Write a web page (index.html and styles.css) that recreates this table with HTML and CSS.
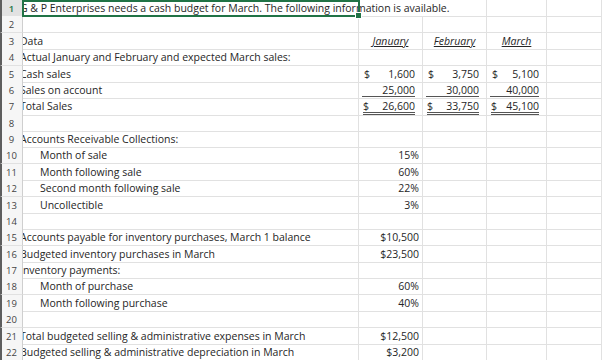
FILE: index.html
```html
<!DOCTYPE html>
<html>
<head>
<meta charset="utf-8">
<link rel="stylesheet" href="styles.css">
</head>
<body>
<div class="sheet">
  <div class="row sel"><div class="rh">1</div><div class="c a ov"><span class="t">G &amp; P Enterprises needs a cash budget for March. The following information is available.</span></div><div class="c b nob"></div><div class="c cc"></div><div class="c d"></div><div class="c e"></div></div>
  <div class="row"><div class="rh">2</div><div class="c a"></div><div class="c b"></div><div class="c cc"></div><div class="c d"></div><div class="c e"></div></div>
  <div class="row"><div class="rh">3</div><div class="c a"><span class="t">Data</span></div><div class="c b mo">January</div><div class="c cc mo">February</div><div class="c d mo">March</div><div class="c e"></div></div>
  <div class="row"><div class="rh">4</div><div class="c a"><span class="t">Actual January and February and expected March sales:</span></div><div class="c b"></div><div class="c cc"></div><div class="c d"></div><div class="c e"></div></div>
  <div class="row"><div class="rh">5</div><div class="c a"><span class="t">Cash sales</span></div>
    <div class="c b"><div class="acct"><span>$</span><span>1,600</span></div></div>
    <div class="c cc"><div class="acct"><span>$</span><span>3,750</span></div></div>
    <div class="c d"><div class="acct"><span>$</span><span>5,100</span></div></div><div class="c e"></div></div>
  <div class="row"><div class="rh">6</div><div class="c a"><span class="t">Sales on account</span></div>
    <div class="c b"><div class="acct u1"><span></span><span>25,000</span></div></div>
    <div class="c cc"><div class="acct u1"><span></span><span>30,000</span></div></div>
    <div class="c d"><div class="acct u1"><span></span><span>40,000</span></div></div><div class="c e"></div></div>
  <div class="row"><div class="rh">7</div><div class="c a"><span class="t">Total Sales</span></div>
    <div class="c b"><div class="acct u2"><span>$</span><span>26,600</span></div></div>
    <div class="c cc"><div class="acct u2"><span>$</span><span>33,750</span></div></div>
    <div class="c d"><div class="acct u2"><span>$</span><span>45,100</span></div></div><div class="c e"></div></div>
  <div class="row"><div class="rh">8</div><div class="c a"></div><div class="c b"></div><div class="c cc"></div><div class="c d"></div><div class="c e"></div></div>
  <div class="row"><div class="rh">9</div><div class="c a"><span class="t">Accounts Receivable Collections:</span></div><div class="c b"></div><div class="c cc"></div><div class="c d"></div><div class="c e"></div></div>
  <div class="row"><div class="rh">10</div><div class="c a"><span class="t ind">Month of sale</span></div><div class="c b num">15%</div><div class="c cc"></div><div class="c d"></div><div class="c e"></div></div>
  <div class="row"><div class="rh">11</div><div class="c a"><span class="t ind">Month following sale</span></div><div class="c b num">60%</div><div class="c cc"></div><div class="c d"></div><div class="c e"></div></div>
  <div class="row"><div class="rh">12</div><div class="c a"><span class="t ind">Second month following sale</span></div><div class="c b num">22%</div><div class="c cc"></div><div class="c d"></div><div class="c e"></div></div>
  <div class="row"><div class="rh">13</div><div class="c a"><span class="t ind">Uncollectible</span></div><div class="c b num">3%</div><div class="c cc"></div><div class="c d"></div><div class="c e"></div></div>
  <div class="row"><div class="rh">14</div><div class="c a"></div><div class="c b"></div><div class="c cc"></div><div class="c d"></div><div class="c e"></div></div>
  <div class="row"><div class="rh">15</div><div class="c a"><span class="t">Accounts payable for inventory purchases, March 1 balance</span></div><div class="c b num">$10,500</div><div class="c cc"></div><div class="c d"></div><div class="c e"></div></div>
  <div class="row"><div class="rh">16</div><div class="c a"><span class="t">Budgeted inventory purchases in March</span></div><div class="c b num">$23,500</div><div class="c cc"></div><div class="c d"></div><div class="c e"></div></div>
  <div class="row"><div class="rh">17</div><div class="c a"><span class="t">Inventory payments:</span></div><div class="c b"></div><div class="c cc"></div><div class="c d"></div><div class="c e"></div></div>
  <div class="row"><div class="rh">18</div><div class="c a"><span class="t ind">Month of purchase</span></div><div class="c b num">60%</div><div class="c cc"></div><div class="c d"></div><div class="c e"></div></div>
  <div class="row"><div class="rh">19</div><div class="c a"><span class="t ind">Month following purchase</span></div><div class="c b num">40%</div><div class="c cc"></div><div class="c d"></div><div class="c e"></div></div>
  <div class="row"><div class="rh">20</div><div class="c a"></div><div class="c b"></div><div class="c cc"></div><div class="c d"></div><div class="c e"></div></div>
  <div class="row"><div class="rh">21</div><div class="c a"><span class="t">Total budgeted selling &amp; administrative expenses in March</span></div><div class="c b num">$12,500</div><div class="c cc"></div><div class="c d"></div><div class="c e"></div></div>
  <div class="row"><div class="rh">22</div><div class="c a"><span class="t">Budgeted selling &amp; administrative depreciation in March</span></div><div class="c b num">$3,200</div><div class="c cc"></div><div class="c d"></div><div class="c e"></div></div>
  <div class="selbox"><div class="handle"></div></div>
</div>
</body>
</html>
```
FILE: styles.css
```css
html, body {
  margin: 0;
  padding: 0;
  background: #ffffff;
}
body {
  font-family: "Open Sans", "Liberation Sans", sans-serif;
  font-size: 10.5px;
  color: #262626;
  width: 602px;
  height: 360px;
  overflow: hidden;
}
.sheet {
  position: relative;
  display: flex;
  flex-direction: column;
}
.row {
  display: grid;
  grid-template-columns: 23px 336px 64px 64px 60px 1fr;
  height: 16.38px;
  box-sizing: border-box;
}
.rh {
  box-sizing: border-box;
  background: #f6f6f6;
  border-left: 2px solid #5e5e5e;
  border-right: 1px solid #cfcfcf;
  border-bottom: 1px solid #e1e1e1;
  text-align: center;
  font-size: 9.5px;
  color: #444;
  line-height: 15px;
  padding-top: 1px;
  padding-right: 1px;
}
.sel .rh {
  background: #e2e2e2;
  color: #217346;
  font-weight: 600;
}
.c {
  box-sizing: border-box;
  border-right: 1px solid #e1e1e1;
  border-bottom: 1px solid #e1e1e1;
  line-height: 15px;
  padding-top: 1px;
  white-space: nowrap;
  min-width: 0;
}
.a {
  overflow: hidden;
}
.a .t {
  display: inline-block;
  margin-left: -3px;
}
.a .t.ind {
  margin-left: 17px;
}
.ov {
  overflow: visible;
  clip-path: inset(0 -400px 0 0);
  position: relative;
  z-index: 2;
}
.nob {
  border-right-color: transparent;
}
.mo {
  text-align: center;
  font-style: italic;
  text-decoration: underline;
  text-underline-offset: 1px;
}
.num {
  text-align: right;
  padding-right: 3px;
}
.acct {
  display: flex;
  justify-content: space-between;
  margin: 0 7px 0 5px;
  height: 14px;
  line-height: 15px;
}
.acct.u1 {
  margin-left: 3px;
  border-bottom: 1px solid #555;
  height: 13px;
}
.acct.u2 {
  margin-left: 4px;
  border-bottom: 3px double #555;
  height: 13px;
  line-height: 14px;
}
.selbox {
  position: absolute;
  left: 22px;
  top: 0;
  width: 338px;
  height: 17px;
  box-sizing: border-box;
  border: 2px solid #217346;
  z-index: 3;
}
.handle {
  position: absolute;
  right: -4px;
  bottom: -4px;
  width: 5px;
  height: 5px;
  background: #217346;
  border: 1px solid #fff;
}
```
